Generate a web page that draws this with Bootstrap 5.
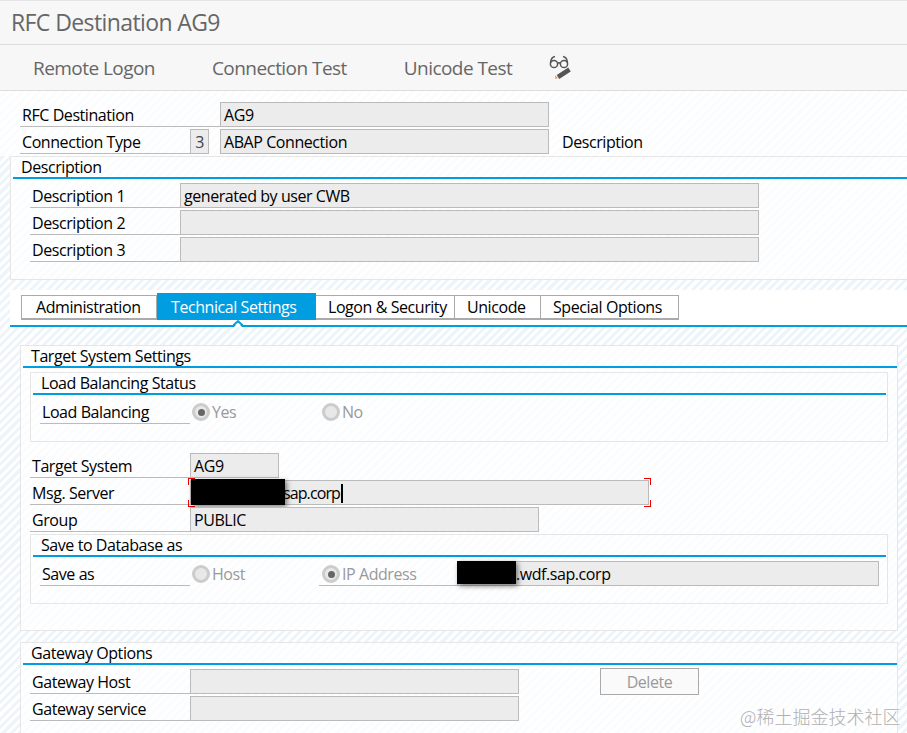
<!DOCTYPE html>
<html lang="en">
<head>
  <meta charset="UTF-8">
  <meta name="viewport" content="width=device-width, initial-scale=1.0">
  <title>RFC Destination AG9</title>
  <link href="https://cdn.jsdelivr.net/npm/bootstrap@5.3.0/dist/css/bootstrap.min.css" rel="stylesheet">
  <style>
    html, body { height: 733px; overflow: hidden; }
    body {
      font-family: "Open Sans", "Liberation Sans", sans-serif;
      font-size: 16px;
      letter-spacing: -0.43px;
      color: #000;
      background: repeating-linear-gradient(135deg, #fff 0 3px, #edf5fb 3px 6px);
      position: relative;
    }
    .title-bar {
      height: 45px; padding-left: 11px; font-size: 23px; letter-spacing: -0.6px; color: #666;
      background: #f7f7f7; border-top: 1px solid #e4e4e4; border-bottom: 1px solid #ddd;
    }
    .tool-bar {
      height: 46px; padding: 2px 0 0 33px; gap: 57px; font-size: 19px; letter-spacing: -0.55px; color: #666;
      background: #f7f7f7; border-bottom: 1px solid #ddd;
    }
    .tool-icon { margin-left: -21px; margin-top: -5px; }
    .head-form { padding: 11px 0 0 20px; height: 65px; background: repeating-linear-gradient(135deg, #fff 0 3px, #fafcfe 3px 6px); }
    .sap-row { height: 25px; margin-bottom: 2px; }
    .sap-label { border-bottom: 1px solid #bbb; padding-left: 2px; line-height: 26px; white-space: nowrap; }
    .sap-input {
      background: #ececec; border: 1px solid #bbb; padding-left: 3px; line-height: 25px;
      white-space: nowrap; position: relative;
    }
    .type-key { color: #444; }
    .sap-head { line-height: 21px; padding-left: 8px; border-bottom: 2px solid #009de0; margin-left: 2px; height: 22px; }
    .sap-panel { border: 1px solid #e6e6e6; background: repeating-linear-gradient(135deg, #fff 0 3px, #fafcfe 3px 6px); }
    .panel-desc { margin-left: 10px; height: 124px; border-right: 0; }
    .panel-desc .sap-row { margin-left: 19px; }
    .desc-rows { padding-top: 4px; }
    .tab-strip { background: #fff; margin: 10px 0 0 10px; height: 37px; padding: 3px 0 0 11px; border-bottom: 2px solid #009de0; position: relative; }
    .sap-tab {
      height: 25px; margin-top: 2px; padding-left: 12px; border: 1px solid #aaa; border-left-width: 0; border-bottom-width: 2px;
      line-height: 23px; background: #fff; white-space: nowrap;
    }
    .sap-tab.first-tab { border-left-width: 1px; padding-left: 14px; }
    .sap-tab.on-tab { height: 27px; margin-top: 0; padding-left: 14px; background: #009de0; color: #fff; border: 0; line-height: 28px; }
    .tab-caret { position: absolute; left: 223px; bottom: -2px; }
    .panel-target { margin: 18px 9px 0 20px; height: 286px; }
    .panel-inner { margin: 4px 9px 0 9px; }
    .panel-inner .sap-head { margin-right: 1px; }
    .panel-lb { height: 70px; margin-bottom: 11px; }
    .panel-save { height: 70px; margin-top: 0; }
    .inner-row { padding: 6px 0 0 9px; }
    .radio-mark {
      width: 18px; height: 18px; border-radius: 50%; border: 3px solid #ccc; background: #e8e8e8;
      display: flex; align-items: center; justify-content: center; flex: none;
    }
    .radio-mark.checked::after { content: ""; width: 7px; height: 7px; border-radius: 50%; background: #666; }
    .radio-text { color: #999; margin-left: 2px; }
    .target-rows { margin-left: 9px; }
    .black-out { position: absolute; background: #000; box-shadow: 2px 2px 5px rgba(0,0,0,.5); }
    .msg-value { letter-spacing: -0.9px; }
    .caret-bar { display: inline-block; width: 2px; height: 19px; background: #000; vertical-align: -4px; margin-left: 1px; }
    .red-corner { position: absolute; width: 7px; height: 7px; border: 0 solid #e00; }
    .panel-gate { margin: 11px 9px 0 20px; height: 100px; }
    .btn-sap {
      width: 99px; height: 27px; margin: -1px 0 0 81px; border: 1px solid #aaa; background: #fafafa; color: #999;
      border-radius: 0; padding: 0; font-size: 16px; letter-spacing: -0.43px; line-height: 24px;
    }
    .wm {
      position: absolute; left: 740px; top: 703px; font-size: 18px; letter-spacing: 0; color: #b0b0b0; font-weight: 300;
      font-family: "Noto Sans CJK SC", "Open Sans", sans-serif; white-space: nowrap; line-height: 26px;
    }
  </style>
</head>
<body>
  <div class="title-bar d-flex align-items-center">RFC Destination AG9</div>
  <div class="tool-bar d-flex align-items-center">
    <span>Remote Logon</span>
    <span>Connection Test</span>
    <span>Unicode Test</span>
    <svg class="tool-icon" width="26" height="26" viewBox="0 0 26 26">
      <g fill="none" stroke="#555" stroke-width="1.5">
        <circle cx="6" cy="11" r="3.6"/>
        <circle cx="16" cy="11" r="3.6"/>
        <path d="M9.5 10.5q1.500-1.500 3 0"/>
        <path d="M2.500 10Q3 4 7 3.500M19.500 10Q19 4 15 3.500"/>
      </g>
      <path d="M21.500 16.500L10 24" stroke="#555" stroke-width="4.500"/>
      <path d="M7.500 26l-.5-3.500 3 2.500z" fill="#e8973a"/>
    </svg>
  </div>

  <div class="head-form">
    <div class="sap-row d-flex">
      <div class="sap-label" style="width:200px">RFC Destination</div>
      <div class="sap-input" style="width:329px">AG9</div>
    </div>
    <div class="sap-row d-flex">
      <div class="sap-label" style="width:170px">Connection Type</div>
      <div class="sap-input type-key text-center px-0" style="width:19px">3</div>
      <div class="sap-input" style="width:329px;margin-left:11px">ABAP Connection</div>
      <div style="line-height:26px;margin-left:13px">Description</div>
    </div>
  </div>

  <div class="sap-panel panel-desc">
    <div class="sap-head">Description</div>
    <div class="desc-rows">
      <div class="sap-row d-flex">
        <div class="sap-label" style="width:150px">Description 1</div>
        <div class="sap-input" style="width:579px">generated by user CWB</div>
      </div>
      <div class="sap-row d-flex">
        <div class="sap-label" style="width:150px">Description 2</div>
        <div class="sap-input" style="width:579px"></div>
      </div>
      <div class="sap-row d-flex">
        <div class="sap-label" style="width:150px">Description 3</div>
        <div class="sap-input" style="width:579px"></div>
      </div>
    </div>
  </div>

  <div class="tab-strip d-flex">
    <div class="sap-tab first-tab" style="width:136px">Administration</div>
    <div class="sap-tab on-tab" style="width:159px">Technical Settings</div>
    <div class="sap-tab" style="width:139px">Logon &amp; Security</div>
    <div class="sap-tab" style="width:86px">Unicode</div>
    <div class="sap-tab" style="width:138px">Special Options</div>
    <svg class="tab-caret" width="10" height="7" viewBox="0 0 10 7">
      <path d="M1 7L5 3l4 4z" fill="#fff"/>
      <path d="M0 5.500L5 1.200l5 4.300" fill="none" stroke="#009de0" stroke-width="2"/>
    </svg>
  </div>

  <div class="sap-panel panel-target">
    <div class="sap-head">Target System Settings</div>
    <div class="sap-panel panel-inner panel-lb">
      <div class="sap-head">Load Balancing Status</div>
      <div class="inner-row d-flex">
        <div class="sap-label" style="width:150px;height:23px;line-height:22px">Load Balancing</div>
        <div class="d-flex align-items-center" style="margin-left:2px;width:130px;height:22px"><span class="radio-mark checked"></span><span class="radio-text">Yes</span></div>
        <div class="d-flex align-items-center" style="height:22px"><span class="radio-mark"></span><span class="radio-text">No</span></div>
      </div>
    </div>
    <div class="target-rows">
      <div class="sap-row d-flex">
        <div class="sap-label" style="width:160px">Target System</div>
        <div class="sap-input" style="width:89px">AG9</div>
      </div>
      <div class="sap-row d-flex">
        <div class="sap-label" style="width:160px">Msg. Server</div>
        <div class="sap-input" style="width:459px;padding-left:92px"><span class="msg-value">sap.corp</span><span class="caret-bar"></span>
          <span class="red-corner" style="left:-3px;top:-3px;border-width:1px 0 0 1px"></span>
          <span class="red-corner" style="right:-3px;top:-3px;border-width:1px 1px 0 0"></span>
          <span class="red-corner" style="left:-3px;bottom:-3px;border-width:0 0 1px 1px"></span>
          <span class="red-corner" style="right:-3px;bottom:-3px;border-width:0 1px 1px 0"></span>
          <span class="black-out" style="left:0;top:-2px;width:94px;height:26px"></span>
        </div>
      </div>
      <div class="sap-row d-flex">
        <div class="sap-label" style="width:160px">Group</div>
        <div class="sap-input" style="width:349px">PUBLIC</div>
      </div>
    </div>
    <div class="sap-panel panel-inner panel-save">
      <div class="sap-head">Save to Database as</div>
      <div class="inner-row d-flex" style="padding-top:4px">
        <div class="sap-label" style="width:150px;height:25px">Save as</div>
        <div class="d-flex align-items-center" style="margin-left:2px;width:127px;height:26px"><span class="radio-mark"></span><span class="radio-text">Host</span></div>
        <div class="sap-label d-flex align-items-center" style="width:138px;height:25px;padding:2px 0 0 3px"><span class="radio-mark checked"></span><span class="radio-text">IP Address</span></div>
        <div class="sap-input" style="width:422px;height:25px;padding-left:58px">.wdf.sap.corp
          <span class="black-out" style="left:-1px;top:-1px;width:59px;height:23px"></span>
        </div>
      </div>
    </div>
  </div>

  <div class="sap-panel panel-gate">
    <div class="sap-head">Gateway Options</div>
    <div class="target-rows" style="padding-top:4px">
      <div class="sap-row d-flex">
        <div class="sap-label" style="width:160px">Gateway Host</div>
        <div class="sap-input" style="width:329px"></div>
        <button type="button" class="btn btn-sap">Delete</button>
      </div>
      <div class="sap-row d-flex">
        <div class="sap-label" style="width:160px">Gateway service</div>
        <div class="sap-input" style="width:329px"></div>
      </div>
    </div>
  </div>

  <div class="wm">@稀土掘金技术社区</div>
  <script src="https://cdn.jsdelivr.net/npm/bootstrap@5.3.0/dist/js/bootstrap.bundle.min.js"></script>
</body>
</html>
